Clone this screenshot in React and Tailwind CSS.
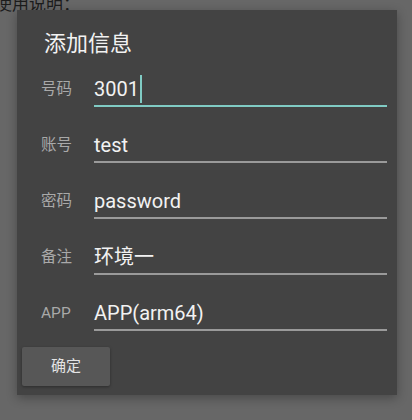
import React from 'react';

const fields = [
    { label: '号码', value: '3001', active: true },
    { label: '账号', value: 'test' },
    { label: '密码', value: 'password' },
    { label: '备注', value: '环境一' },
    { label: 'APP', value: 'APP(arm64)' },
];

const font = { fontFamily: 'Roboto, "Noto Sans CJK SC", sans-serif' };

const App = () => {
    return (
        <div className="relative w-[412px] h-[420px] overflow-hidden bg-[#676767]" style={font}>
            {/* page text behind the dialog */}
            <div className="-mt-[8px] -ml-[5px] text-[17px] leading-[24px] text-[#1c1c1c]">使用说明：</div>

            {/* dialog */}
            <div className="absolute left-[17px] top-[10px] w-[380px] h-[385px] bg-[#434343] shadow-[0_3px_10px_rgba(0,0,0,0.3)]">
                <div className="pt-[20px] pl-[27px] text-[22px] leading-[28px] text-[#f2f2f2]">添加信息</div>

                <div className="mt-[14px] flex flex-col gap-[21px] pr-[10px]">
                    {fields.map((f) => (
                        <div key={f.label} className="flex items-center h-[35px]">
                            <div className="w-[77px] pl-[24px] text-[15.5px] text-[#a9a9a9]">{f.label}</div>
                            <div
                                className={
                                    f.active
                                        ? 'flex-1 h-[35px] flex items-center border-b-2 border-[#80cbc4] text-[20px] text-[#f2f2f2]'
                                        : 'flex-1 h-[35px] flex items-center border-b-2 border-[#9a9a9a] text-[20px] text-[#f2f2f2]'
                                }
                            >
                                <span>{f.value}</span>
                                {f.active && <span className="ml-[1px] w-[2px] h-[28px] bg-[#80cbc4]" />}
                            </div>
                        </div>
                    ))}
                </div>

                <button className="mt-[16px] ml-[5px] w-[88px] h-[39px] rounded-[2px] bg-[#575757] text-[15px] text-[#e4e4e4] shadow-[0_1px_3px_rgba(0,0,0,0.35)]">
                    确定
                </button>
            </div>
        </div>
    );
};

export default App;
